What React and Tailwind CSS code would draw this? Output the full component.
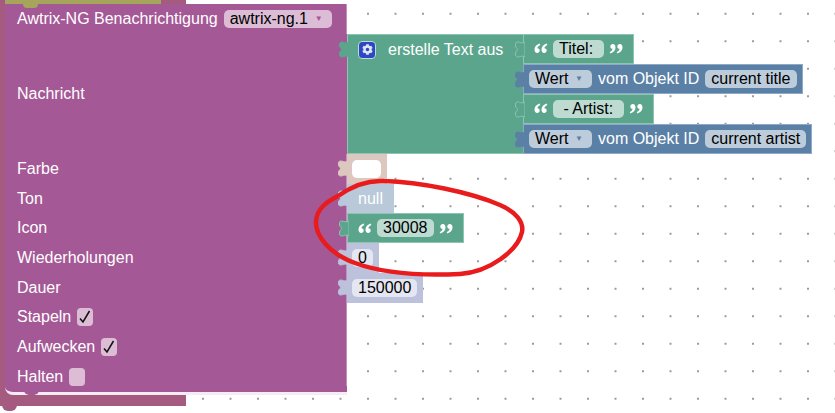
import { FaCog } from 'react-icons/fa'

// puzzle tab sticking out to the left of a block
function Tab({ fill, stroke }) {
  return (
    <svg className="absolute left-[-9px] top-[6px]" width="10" height="17" viewBox="0 0 10 17">
      <path d="M10 1C7 3 5 1 3 1 1 1 0 2 .5 5 1 7 2.500 7.500 2.500 8.500S1 10 .5 12C0 15 1 16 3 16 5 16 7 14 10 16z" fill={fill} stroke={stroke} strokeWidth="1" />
    </svg>
  )
}

function Quote({ closing }) {
  return (
    <svg width="14" height="11" viewBox="0 0 14 11" className={closing ? 'rotate-180' : ''}>
      <path d="M5.800 0.500C2.500 1.500 0.500 3.500 0.500 6.500c0 2 1 3.500 2.700 3.500 1.400 0 2.500-1 2.500-2.400S4.700 5.300 3.400 5.300C3.600 3.800 4.500 2.800 6.300 2z" fill="#fff" />
      <path d="M12.800 0.500C9.500 1.500 7.500 3.500 7.500 6.500c0 2 1 3.500 2.700 3.500 1.400 0 2.500-1 2.500-2.400s-1-2.300-2.300-2.300c.2-1.500 1.100-2.500 2.900-3.300z" fill="#fff" />
    </svg>
  )
}

function Check() {
  return (
    <svg width="12" height="14" viewBox="0 0 12 14">
      <path d="M1 8.500l3 3.500L10.500 1" fill="none" stroke="#111" strokeWidth="1.500" />
    </svg>
  )
}

function Checkbox({ checked }) {
  return (
    <span className="flex h-[18px] w-[16px] items-center justify-center rounded-[4px] bg-[#dcbdd5]">
      {checked && <Check />}
    </span>
  )
}

function Row({ label, children }) {
  return (
    <div className="flex h-[29.7px] items-start">
      <div className="flex h-full w-[342px] shrink-0 items-center gap-[6px] border-r border-[#c690bd] bg-[#a55896] pl-[12px] text-white">
        {label}
      </div>
      {children}
    </div>
  )
}

function TextBlock({ value, tabFill = '#5ba58c' }) {
  return (
    <div className="relative flex h-[30px] w-fit items-center gap-[5px] border border-[#8cc5b0] bg-[#5ba58c] pl-[10px] pr-[10px]">
      <Tab fill={tabFill} stroke="#8cc5b0" />
      <Quote />
      <span className="flex h-[18px] items-center whitespace-pre rounded-[5px] bg-[#bddbd1] px-[6px] text-black">{value}</span>
      <Quote closing />
    </div>
  )
}

function ValueBlock({ id }) {
  return (
    <div className="relative flex h-[30px] w-fit items-center gap-[6px] border border-[#8ca9c9] bg-[#5b80a5] pl-[5px] pr-[5px] text-white">
      <Tab fill="#5b80a5" stroke="#5b80a5" />
      <span className="flex h-[18px] w-[63px] items-center justify-between rounded-[5px] bg-[#bdccdb] pl-[6px] pr-[9px] text-black">
        Wert
        <span className="text-[8px] text-[#5b80a5]">▼</span>
      </span>
      <span>vom Objekt ID</span>
      <span className="flex h-[18px] items-center rounded-[5px] bg-[#bdccdb] px-[6px] text-black">{id}</span>
    </div>
  )
}

function NumberBlock({ value }) {
  return (
    <div className="relative flex h-[30px] w-fit items-center bg-[#bcc1dc] pl-[5px] pr-[6px]">
      <Tab fill="#bcc1dc" stroke="#bcc1dc" />
      <span className="flex h-[18px] items-center rounded-[5px] bg-[#e4e6f1] px-[6px] text-black">{value}</span>
    </div>
  )
}

export default function App() {
  return (
    <div className="relative h-[413px] w-[835px] overflow-hidden bg-white bg-[radial-gradient(circle,#9a9a9a_1px,transparent_1.4px)] bg-[size:27.5px_27.5px] bg-[position:-3.250px_0] font-['Liberation_Sans',sans-serif] text-[16px] leading-none">

      {/* outer block behind the main one */}
      <div className="relative h-[406px] w-[186px] bg-[#a55b80] pl-[5px]">
        <div className="h-[4px] w-[156px] bg-[#a5a55b]" />

        <div className="w-max">
          <Row label={
            <>
              Awtrix-NG Benachrichtigung
              <span className="flex h-[18px] w-[108px] items-center justify-between rounded-[5px] bg-[#dcbdd5] pl-[6px] pr-[9px] text-black">
                awtrix-ng.1
                <span className="text-[8px] text-[#a55896]">▼</span>
              </span>
            </>
          } />

          {/* message with the text join block */}
          <div className="flex">
            <div className="flex w-[342px] shrink-0 items-center bg-[#a55896] pl-[12px] text-white">Nachricht</div>
            <div className="relative flex h-[120.4px]">
              <div className="relative w-[176px] border border-[#8cc5b0] border-r-0 bg-[#5ba58c] text-white">
                <Tab fill="#5ba58c" stroke="#5ba58c" />
                <div className="flex h-[30px] items-center">
                  <span className="ml-[10px] flex h-[18px] w-[18px] items-center justify-center rounded-[4px] border border-[#bddbd1] bg-[#2b47c4]">
                    <FaCog className="text-[11px] text-[#dfe5f5]" />
                  </span>
                  <span className="ml-[12px]">erstelle Text aus</span>
                </div>
              </div>
              <div className="flex flex-col">
                <TextBlock value="Titel: " />
                <ValueBlock id="current title" />
                <TextBlock value=" - Artist: " />
                <ValueBlock id="current artist" />
              </div>
            </div>
          </div>

          <Row label="Farbe">
            <div className="relative flex h-[30px] w-[40px] items-center bg-[#dcc8bf] pl-[5px]">
              <Tab fill="#dcc8bf" stroke="#dcc8bf" />
              <span className="h-[18px] w-[29px] rounded-[5px] bg-white" />
            </div>
          </Row>
          <Row label="Ton">
            <div className="relative flex h-[30px] w-[47px] items-center justify-center bg-[#b9c9d9] text-white">
              <Tab fill="#b9c9d9" stroke="#b9c9d9" />
              null
            </div>
          </Row>
          <Row label="Icon">
            <TextBlock value="30008" />
          </Row>
          <Row label="Wiederholungen">
            <NumberBlock value="0" />
          </Row>
          <Row label="Dauer">
            <NumberBlock value="150000" />
          </Row>
          <Row label={<>Stapeln <Checkbox checked /></>} />
          <Row label={<>Aufwecken <Checkbox checked /></>} />
          <Row label={<>Halten <Checkbox /></>} />
          <div className="relative mt-[-6px] h-[9px] w-[342px] rounded-bl-[8px] border-b-[3px] border-[#f6edf4] bg-[#a55896]" />
        </div>

        {/* notches of the blocks */}
        <div className="absolute left-[23px] top-[4px] h-[4px] w-[15px] rounded-b-[6px] bg-[#a5a55b]" />
        <div className="absolute left-[24px] top-[390px] h-[5px] w-[15px] rounded-b-[6px] bg-[#a55896]" />
        <div className="absolute left-[2px] top-[405px] h-[6px] w-[15px] rounded-b-[7px] bg-[#a55b80]" />
      </div>

      {/* red marker drawn over the screenshot */}
      <svg className="absolute left-0 top-0" width="835" height="413" viewBox="0 0 835 413">
        <path d="M338 196C352 186 368 180 384 181C420 182 470 192 500 205C516 212 524 222 522 232C518 250 490 272 460 274C420 276 385 274 355 263C330 254 315 236 316 221C317 208 328 201 338 196" fill="none" stroke="#e81c1c" strokeWidth="4.500" />
      </svg>
    </div>
  )
}
